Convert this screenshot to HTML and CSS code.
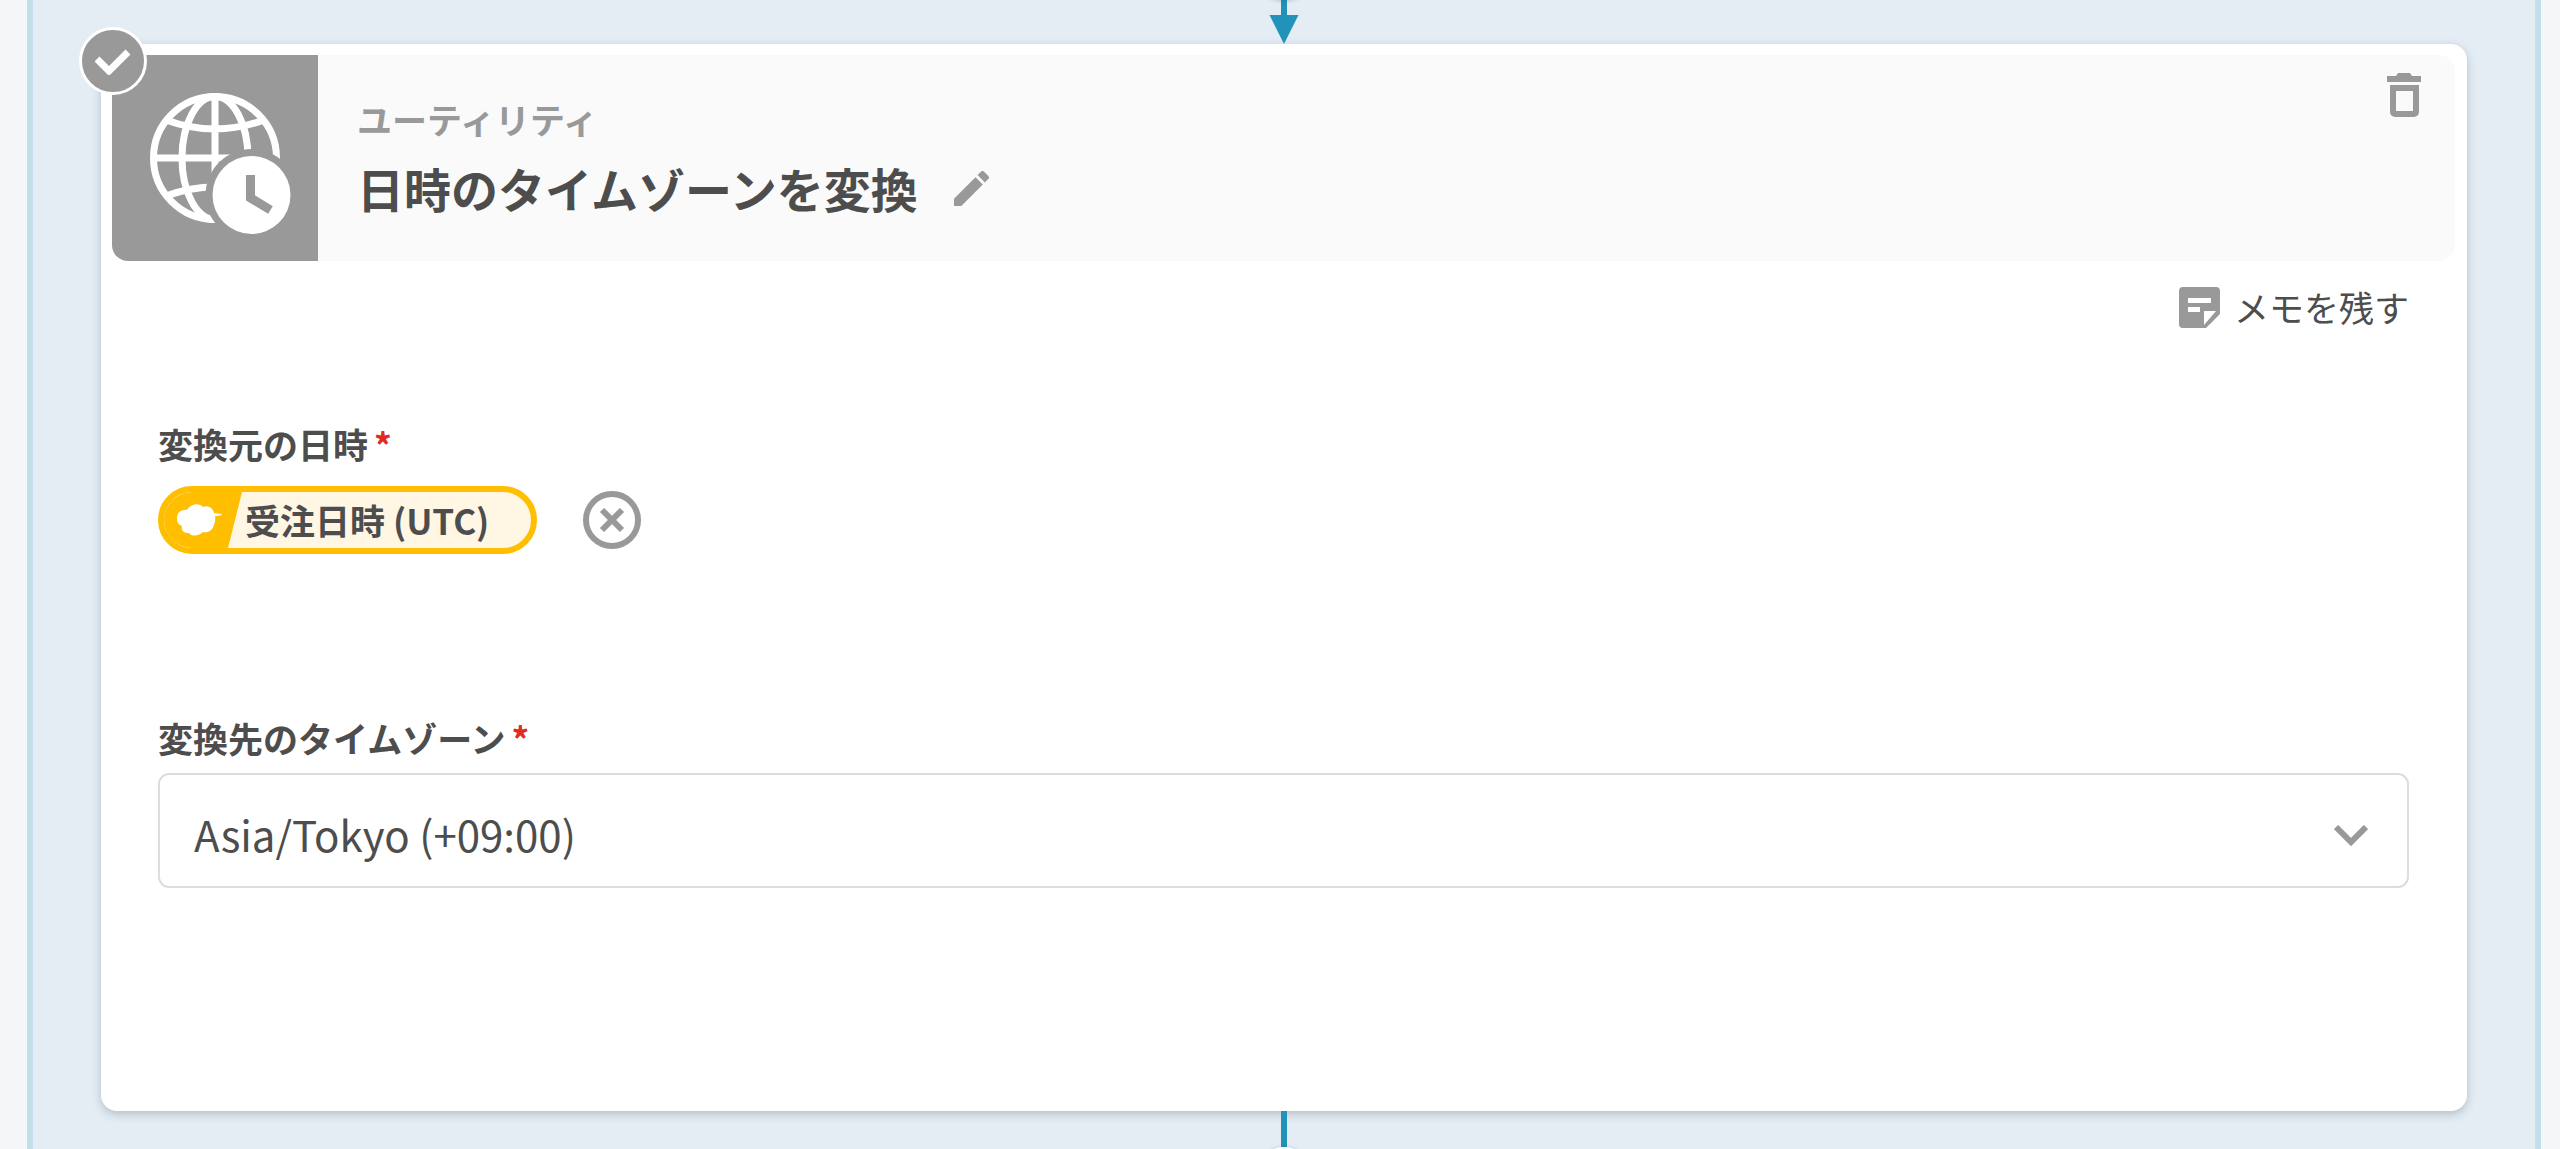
FILE: index.html
```html
<!DOCTYPE html>
<html lang="ja">
<head>
    <meta charset="UTF-8">
    <meta name="viewport" content="width=device-width, initial-scale=1.0">
    <title>日時のタイムゾーンを変換</title>
    <link rel="stylesheet" href="styles.css">
</head>
<body>
    <main class="flow">
        <div class="connector connector-in">
            <svg class="arrow-head" viewBox="0 0 30 30" aria-hidden="true"><path d="M0 0h30L15 30z"/></svg>
        </div>

        <section class="card">
            <header class="card-header">
                <div class="operator-icon">
                    <svg viewBox="0 0 206 206" aria-hidden="true">
                        <mask id="clock-cut">
                            <rect width="206" height="206" fill="#fff"/>
                            <circle cx="139.5" cy="140" r="46" fill="#000"/>
                        </mask>
                        <g mask="url(#clock-cut)" fill="none" stroke="#fff" stroke-width="7">
                            <circle cx="103" cy="103" r="61.5"/>
                            <ellipse cx="103" cy="103" rx="33" ry="61.5"/>
                            <path d="M103 41v124M41 103h124M54 65q49 18 98 0M54 141q49-18 98 0"/>
                        </g>
                        <circle cx="139.5" cy="140" r="39" fill="#fff"/>
                        <path d="M138.5 120v23l20 12" fill="none" stroke="#999" stroke-width="9"/>
                    </svg>
                </div>
                <div class="card-heading">
                    <p class="category">ユーティリティ</p>
                    <div class="title-row">
                        <h1>日時のタイムゾーンを変換</h1>
                        <button type="button" class="icon-button" aria-label="名前を編集">
                            <svg class="icon-edit" viewBox="3 3 18 18" aria-hidden="true"><path d="M3 17.25V21h3.75L17.81 9.94l-3.75-3.75L3 17.25zM20.71 7.04a1 1 0 0 0 0-1.41l-2.34-2.34a1 1 0 0 0-1.41 0l-1.83 1.83 3.75 3.75 1.83-1.83z"/></svg>
                        </button>
                    </div>
                </div>
                <button type="button" class="icon-button delete-button" aria-label="削除">
                    <svg class="icon-delete" viewBox="0 0 34 44" aria-hidden="true"><path d="M0 3h9l2-3h12l2 3h9v6H0zM3 12h29v27a5 5 0 0 1-5 5H8a5 5 0 0 1-5-5zm6 6v20h17V18z" fill-rule="evenodd"/></svg>
                </button>
                <span class="status-badge">
                    <svg viewBox="0 0 36 27" aria-label="設定済み"><path d="M2 11l12 12L33 4" fill="none" stroke="#fff" stroke-width="7"/></svg>
                </span>
            </header>

            <div class="card-body">
                <button type="button" class="memo-button">
                    <svg class="icon-memo" viewBox="0 0 41 41" aria-hidden="true"><path d="M4 0h33a4 4 0 0 1 4 4v23L27 41H4a4 4 0 0 1-4-4V4a4 4 0 0 1 4-4zM9 11v5h23v-5zM9 20v5h12v-5zM25 24v14l12-14z" fill-rule="evenodd"/></svg>
                    メモを残す
                </button>

                <div class="field">
                    <p class="field-label">変換元の日時<span class="required">*</span></p>
                    <div class="token-row">
                        <span class="token">
                            <span class="token-icon">
                                <svg viewBox="0 0 45 32" aria-hidden="true"><path d="M0 14C0 9 4 5 10 6C13 0 22-2 26 3C31 1 36 4 37 9L45 10C44 12 41 12 38 12C39 17 37 21 36 23C35 27 30 29 26 28C22 32 15 33 12 29C7 29 4 27 5 22C1 20 0 18 0 14z"/></svg>
                            </span>
                            <span class="token-text">受注日時 (UTC)</span>
                        </span>
                        <button type="button" class="icon-button" aria-label="クリア">
                            <svg class="icon-clear" viewBox="0 0 58 58" aria-hidden="true"><circle cx="29" cy="29" r="26"/><path d="M19 19l20 20M39 19l-20 20"/></svg>
                        </button>
                    </div>
                </div>

                <div class="field">
                    <label class="field-label" for="timezone">変換先のタイムゾーン<span class="required">*</span></label>
                    <div class="select-wrap">
                        <select id="timezone">
                            <option>Asia/Tokyo (+09:00)</option>
                        </select>
                        <svg class="icon-chevron" viewBox="0 0 34 21" aria-hidden="true"><path d="M2 2l15 15L32 2"/></svg>
                    </div>
                </div>
            </div>
        </section>

        <div class="connector connector-out"></div>
    </main>
</body>
</html>
```
FILE: styles.css
```css
* {
    margin: 0;
    padding: 0;
    box-sizing: border-box;
}

body {
    font-family: "Noto Sans CJK JP", sans-serif;
    font-size: 35px;
    line-height: 52px;
    color: #4d4d4d;
    background: #f4f6f8;
}

button,
select {
    font: inherit;
    color: inherit;
    border: none;
    background: none;
    cursor: pointer;
}

svg {
    display: block;
    fill: #999;
}

.flow {
    min-height: 100vh;
    margin: 0 19px 0 27px;
    padding: 0 68px;
    border: solid #c3dfea;
    border-width: 0 6px;
    background: #e4edf4;
    overflow: hidden;
}

/* カード間をつなぐ線 */
.connector {
    position: relative;
    width: 6px;
    margin: 0 auto;
    background: #2192b8;
}

.connector-in {
    height: 44px;
    background: linear-gradient(#2192b8 20px, transparent 20px);
}

.connector-out {
    height: 36px;
}

/* 前後の追加ボタンの端 */
.connector-in::before,
.connector-out::after {
    content: "";
    position: absolute;
    left: -27px;
    width: 60px;
    height: 60px;
    border-radius: 50%;
    background: #fff;
    box-shadow: 0 1px 4px rgba(60, 80, 100, 0.3);
}

.connector-in::before {
    bottom: 100%;
}

.connector-out::after {
    top: 100%;
}

.arrow-head {
    position: absolute;
    bottom: 0;
    left: -12px;
    width: 30px;
    height: 29px;
    fill: #2192b8;
}

.card {
    padding: 11px 12px 223px 11px;
    border-radius: 16px;
    background: #fff;
    box-shadow: 0 3px 10px rgba(60, 80, 100, 0.3);
}

.card-header {
    position: relative;
    display: flex;
    align-items: flex-start;
    border-radius: 16px;
    background: #fafafa;
}

.operator-icon {
    width: 206px;
    height: 206px;
    border-radius: 0 0 0 16px;
    background: #999;
}

.status-badge {
    position: absolute;
    top: -28px;
    left: -33px;
    display: flex;
    align-items: center;
    justify-content: center;
    width: 68px;
    height: 68px;
    border: 3px solid #fff;
    border-radius: 50%;
    background: #999;
}

.status-badge svg {
    width: 36px;
    height: 27px;
}

.card-heading {
    flex: 1;
    padding: 38px 0 0 39px;
}

.category {
    font-weight: 700;
    color: #999;
}

.title-row {
    display: flex;
    align-items: center;
    gap: 36px;
    margin-top: 9px;
}

h1 {
    font-size: 47px;
    line-height: 68px;
    font-weight: 700;
}

.delete-button {
    margin: 18px 34px 0 0;
}

.icon-edit {
    width: 35px;
    height: 35px;
}

.icon-delete {
    width: 34px;
    height: 44px;
}

.card-body {
    display: flex;
    flex-direction: column;
    padding: 20px 46px 0;
}

.memo-button {
    display: flex;
    align-items: center;
    align-self: flex-end;
    gap: 14px;
}

.icon-memo {
    width: 41px;
    height: 41px;
}

.field {
    margin-top: 85px;
}

.field + .field {
    margin-top: 158px;
}

.field-label {
    display: block;
    font-weight: 700;
}

.required {
    margin-left: 6px;
    color: #e02b20;
}

.token-row {
    display: flex;
    align-items: center;
    gap: 46px;
    margin-top: 16px;
}

.token {
    display: flex;
    height: 68px;
    border: 6px solid #ffbf00;
    border-radius: 34px;
    background: #fff6e3;
    overflow: hidden;
}

.token-icon {
    display: flex;
    align-items: center;
    width: 78px;
    padding-left: 13px;
    background: #ffbf00;
    clip-path: polygon(0 0, 100% 0, 64px 100%, 0 100%);
}

.token-icon svg {
    width: 45px;
    height: 32px;
    fill: #fff;
}

.token-text {
    padding: 2px 42px 0 3px;
    font-weight: 700;
}

.icon-clear {
    width: 58px;
    height: 58px;
    fill: none;
    stroke: #999;
    stroke-width: 6;
}

.select-wrap {
    position: relative;
    margin-top: 9px;
}

select {
    display: block;
    width: 100%;
    height: 115px;
    padding: 6px 100px 0 34px;
    border: 2px solid #ddd;
    border-radius: 11px;
    font-size: 42px;
    line-height: 68px;
    appearance: none;
}

.icon-chevron {
    position: absolute;
    top: 52px;
    right: 41px;
    width: 34px;
    height: 21px;
    fill: none;
    stroke: #999;
    stroke-width: 6;
    pointer-events: none;
}
```
